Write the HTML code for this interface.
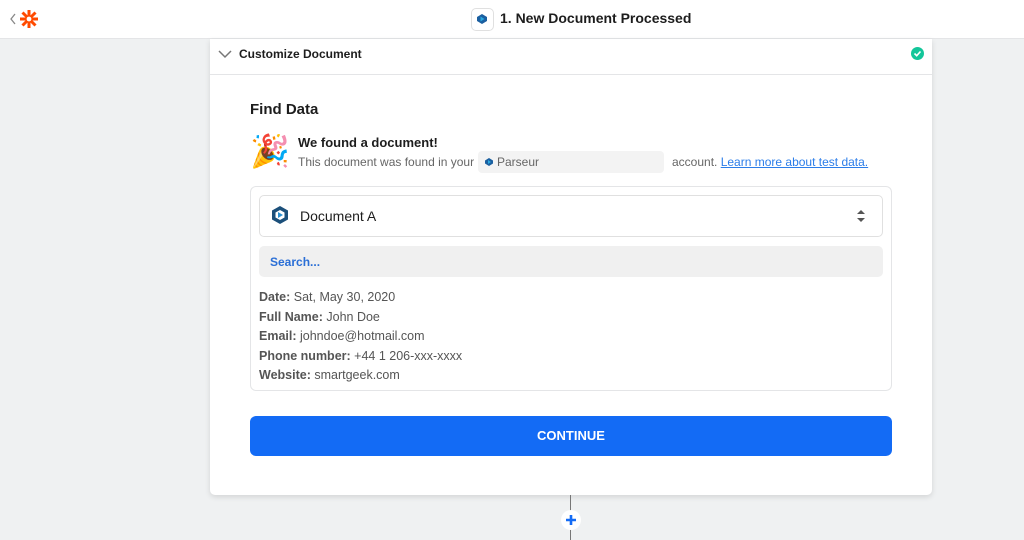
<!DOCTYPE html>
<html><head><style>
body{margin:0;width:1024px;height:540px;background:#eff1f2;font-family:"Liberation Sans",sans-serif;position:relative;overflow:hidden;color:#2d2e2e}
.top{position:absolute;left:0;top:0;width:1024px;height:38px;background:#fff;border-bottom:1px solid #e4e5e7}
.card{position:absolute;left:210px;top:39px;width:722px;height:456px;background:#fff;box-shadow:0 2px 6px rgba(0,0,0,.12);border-radius:0 0 5px 5px}
.abs{position:absolute}
</style></head><body>
<div class="top">
 <svg class="abs" style="left:8px;top:8px" width="34" height="22"><path d="M7 6 L3 11 L7 16" stroke="#888" stroke-width="1.3" fill="none"/>
 <g stroke="#ff4a00" stroke-width="3"><line x1="30" y1="11" x2="12" y2="11"/><line x1="21" y1="2" x2="21" y2="20"/><line x1="14.5" y1="4.5" x2="27.5" y2="17.5"/><line x1="27.5" y1="4.5" x2="14.5" y2="17.5"/></g><circle cx="21" cy="11" r="2.4" fill="#fff"/></svg>
 <div class="abs" style="left:471px;top:8px;width:21px;height:21px;border:1px solid #e0e0e0;border-radius:5px"></div>
 <svg class="abs" style="left:476px;top:13px" width="12" height="12"><path d="M6 1 L11 4 L11 8 L6 11 L1 8 L1 4Z" fill="#1b5fa0"/><path d="M4.5 3.5 L8.5 6 L4.5 8.5Z" fill="#2aa9e0"/></svg>
 <div class="abs" style="left:500px;top:10px;font-size:14px;font-weight:bold;color:#1d1d1d">1. New Document Processed</div>
</div>
<div class="card">
 <div class="abs" style="left:0;top:0;width:722px;height:35px;border-bottom:1px solid #e4e5e7"></div>
 <svg class="abs" style="left:8px;top:10px" width="14" height="10"><path d="M1 2 L7 8 L13 2" stroke="#777" stroke-width="1.5" fill="none"/></svg>
 <div class="abs" style="left:29px;top:8px;font-size:12px;font-weight:bold;color:#1d1d1d">Customize Document</div>
 <div class="abs" style="left:701px;top:8px;width:13px;height:13px;border-radius:50%;background:#13c69a"></div>
 <svg class="abs" style="left:701px;top:8px" width="13" height="13"><path d="M3.5 6.5 L5.7 8.7 L9.5 4.5" stroke="#fff" stroke-width="1.6" fill="none"/></svg>
 <div class="abs" style="left:40px;top:62px;font-size:15px;font-weight:bold;color:#1d1d1d">Find Data</div>
 <div class="abs" style="left:40px;top:92px;font-size:32px;line-height:40px">🎉</div>
 <div class="abs" style="left:88px;top:96px;font-size:13px;font-weight:bold;color:#1d1d1d">We found a document!</div>
 <div class="abs" style="left:88px;top:116px;font-size:12px;color:#666">This document was found in your</div>
 <div class="abs" style="left:268px;top:112px;width:186px;height:22px;background:#f3f3f3;border-radius:4px"></div>
 <svg class="abs" style="left:274px;top:118px" width="10" height="10"><path d="M5 1 L9 3.5 L9 6.5 L5 9 L1 6.5 L1 3.5Z" fill="#1b5fa0"/><path d="M4 3 L7 5 L4 7Z" fill="#2aa9e0"/></svg>
 <div class="abs" style="left:287px;top:116px;font-size:12px;color:#666">Parseur</div>
 <div class="abs" style="left:462px;top:116px;font-size:12px;color:#666">account. <span style="color:#2b7de9;text-decoration:underline">Learn more about test data.</span></div>
 <div class="abs" style="left:40px;top:147px;width:640px;height:203px;border:1px solid #e4e5e7;border-radius:6px"></div>
 <div class="abs" style="left:49px;top:156px;width:622px;height:40px;border:1px solid #e0e0e0;border-radius:5px"></div>
 <svg class="abs" style="left:60px;top:166px" width="20" height="20"><path d="M10 1 L18 5.5 L18 14.5 L10 19 L2 14.5 L2 5.5Z" fill="#1b4f7a"/><path d="M10 5 L14.5 7.5 L14.5 12.5 L10 15 L5.5 12.5 L5.5 7.5Z" fill="#fff"/><path d="M8 7 L13 10 L8 13Z" fill="#2a8fd0"/></svg>
 <div class="abs" style="left:90px;top:169px;font-size:14px;color:#1d1d1d">Document A</div>
 <svg class="abs" style="left:646px;top:170px" width="10" height="14"><path d="M1 5 L5 1 L9 5Z M1 9 L5 13 L9 9Z" fill="#555"/></svg>
 <div class="abs" style="left:49px;top:207px;width:624px;height:31px;background:#f0f0f0;border-radius:5px"></div>
 <div class="abs" style="left:60px;top:216px;font-size:12px;color:#2b6fd6;font-weight:bold">Search...</div>
 <div class="abs" style="left:49px;top:249px;font-size:12.5px;line-height:19.5px;color:#555">
  <b>Date:</b> Sat, May 30, 2020<br><b>Full Name:</b> John Doe<br><b>Email:</b> johndoe@hotmail.com<br><b>Phone number:</b> +44 1 206-xxx-xxxx<br><b>Website:</b> smartgeek.com</div>
 <div class="abs" style="left:40px;top:377px;width:642px;height:40px;background:#136bf5;border-radius:6px;color:#fff;font-size:13px;font-weight:bold;text-align:center;line-height:40px">CONTINUE</div>
</div>
<div class="abs" style="left:570px;top:495px;width:1px;height:45px;background:#777"></div>
<div class="abs" style="left:561px;top:510px;width:20px;height:20px;border-radius:50%;background:#fff"></div>
<svg class="abs" style="left:565px;top:514px" width="12" height="12"><path d="M6 1V11M1 6H11" stroke="#136bf5" stroke-width="2.6"/></svg>
</body></html>
